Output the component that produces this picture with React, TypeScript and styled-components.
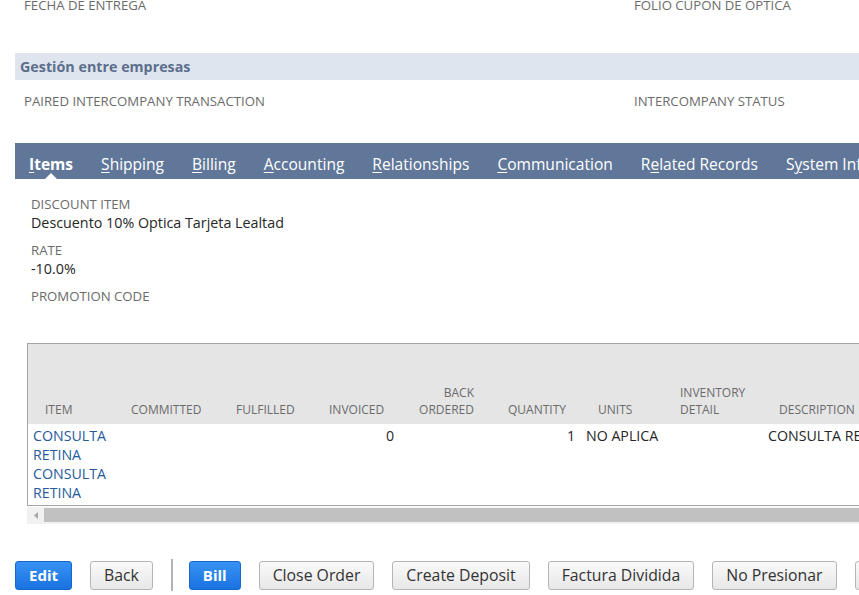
import React from "react";
import styled, { createGlobalStyle } from "styled-components";

const GlobalStyle = createGlobalStyle`
  html, body {
    margin: 0;
    padding: 0;
    background: #ffffff;
    overflow: hidden;
    font-family: "Open Sans", "Liberation Sans", Arial, sans-serif;
  }
`;

const Page = styled.div`
  width: 859px;
  height: 595px;
  overflow: hidden;
  padding-left: 15px;
  box-sizing: border-box;
  display: flex;
  flex-direction: column;
`;

const FieldRow = styled.div<{ $top: number; $bottom: number }>`
  display: grid;
  grid-template-columns: 610px 1fr;
  padding-left: 9px;
  margin-top: ${(p) => p.$top}px;
  margin-bottom: ${(p) => p.$bottom}px;
`;

const Field = styled.div<{ $gap?: number }>`
  display: flex;
  flex-direction: column;
  margin-bottom: ${(p) => p.$gap ?? 0}px;
`;

const Label = styled.div`
  font-size: 13.2px;
  line-height: 17px;
  color: #6b6b6b;
  text-transform: uppercase;
  white-space: nowrap;
`;

const Value = styled.div`
  font-size: 14.3px;
  line-height: 20px;
  min-height: 20px;
  color: #262626;
  white-space: nowrap;
`;

const SectionHeader = styled.div`
  height: 27px;
  line-height: 27px;
  background: #dfe5ee;
  color: #5b6e8c;
  font-weight: 700;
  font-size: 14.3px;
  padding-left: 5px;
  white-space: nowrap;
`;

const TabBar = styled.div`
  height: 36px;
  background: #607799;
  display: flex;
  white-space: nowrap;
  overflow: hidden;
`;

const Tab = styled.div<{ $active?: boolean }>`
  position: relative;
  flex: none;
  padding: 7px 14px 0;
  line-height: 29px;
  font-size: 15.55px;
  color: #ffffff;
  font-weight: ${(p) => (p.$active ? 700 : 400)};
  u {
    text-decoration: underline;
    text-underline-offset: 2px;
    text-decoration-thickness: 1px;
  }
  &::after {
    content: "";
    display: ${(p) => (p.$active ? "block" : "none")};
    position: absolute;
    bottom: 0;
    left: 50%;
    margin-left: -6px;
    width: 0;
    height: 0;
    border-left: 6px solid transparent;
    border-right: 6px solid transparent;
    border-bottom: 6px solid #ffffff;
  }
`;

const TabPanel = styled.div`
  padding: 17px 0 0 12px;
  display: flex;
  flex-direction: column;
`;

const PanelFields = styled.div`
  padding-left: 4px;
  display: flex;
  flex-direction: column;
  margin-bottom: 18px;
`;

const TableBox = styled.div`
  width: 1000px;
  border: 1px solid #a3a3a3;
  display: flex;
  flex-direction: column;
`;

const COLS = "90px 108px 93px 85px 80px 96px 90px 90px 200px";

const HeadRow = styled.div`
  display: grid;
  grid-template-columns: ${COLS};
  height: 80px;
  background: #e5e5e5;
`;

const HeadCell = styled.div<{ $align?: "left" | "right"; $pl?: number; $pr?: number }>`
  display: flex;
  flex-direction: column;
  justify-content: flex-end;
  align-items: ${(p) => (p.$align === "right" ? "flex-end" : "flex-start")};
  text-align: ${(p) => p.$align ?? "left"};
  padding: 0 ${(p) => p.$pr ?? 0}px 6px ${(p) => p.$pl ?? 0}px;
  font-size: 12px;
  line-height: 17px;
  color: #6b6b6b;
  white-space: nowrap;
`;

const DataRow = styled.div`
  display: grid;
  grid-template-columns: ${COLS};
  padding: 2px 0 3px;
  background: #ffffff;
`;

const DataCell = styled.div<{ $align?: "left" | "right"; $pl?: number; $pr?: number; $link?: boolean; $nowrap?: boolean }>`
  text-align: ${(p) => p.$align ?? "left"};
  padding: 0 ${(p) => p.$pr ?? 0}px 0 ${(p) => p.$pl ?? 0}px;
  font-size: 14.2px;
  line-height: 19px;
  color: ${(p) => (p.$link ? "#255a9b" : "#262626")};
  white-space: ${(p) => (p.$nowrap ? "nowrap" : "normal")};
`;

const ScrollTrack = styled.div`
  width: 1000px;
  height: 17px;
  margin-top: 1px;
  background: #f1f1f1;
  display: flex;
  align-items: flex-start;
`;

const ScrollArrow = styled.div`
  width: 17px;
  height: 15px;
  display: flex;
  align-items: center;
  justify-content: center;
  margin-top: 1px;
`;

const ScrollThumb = styled.div`
  flex: 1;
  height: 14px;
  margin-top: 1px;
  background: #c1c1c1;
`;

const ButtonBar = styled.div`
  display: flex;
  align-items: center;
  margin-top: 35px;
  white-space: nowrap;
`;

const Button = styled.button<{ $primary?: boolean }>`
  flex: none;
  height: 29px;
  padding: 0 13px;
  margin-right: 18px;
  border-radius: 3px;
  font-family: "Open Sans", "Liberation Sans", Arial, sans-serif;
  font-size: ${(p) => (p.$primary ? "15px" : "15.8px")};
  line-height: 27px;
  font-weight: ${(p) => (p.$primary ? 700 : 400)};
  color: ${(p) => (p.$primary ? "#ffffff" : "#333333")};
  border: 1px solid ${(p) => (p.$primary ? "#1766c9" : "#b5b5b5")};
  background: ${(p) =>
    p.$primary
      ? "linear-gradient(#3792f4, #1a72e0)"
      : "linear-gradient(#fafafa, #e7e7e7)"};
  cursor: pointer;
`;

const Divider = styled.div`
  flex: none;
  width: 2px;
  height: 32px;
  background: #b3b3b3;
  margin: 0 16px 0 0;
`;

const headers: { label: React.ReactNode; align?: "left" | "right"; pl?: number; pr?: number }[] = [
  { label: "ITEM", pl: 17 },
  { label: "COMMITTED", pl: 13 },
  { label: "FULFILLED", pl: 10 },
  { label: "INVOICED", pl: 10 },
  { label: <>BACK<br />ORDERED</>, align: "right", pr: 10 },
  { label: "QUANTITY", align: "right", pr: 14 },
  { label: "UNITS", pl: 18 },
  { label: <>INVENTORY<br />DETAIL</>, pl: 10 },
  { label: "DESCRIPTION", pl: 19 },
];

export default function App() {
  return (
    <>
      <GlobalStyle />
      <Page>
        <FieldRow $top={-3} $bottom={19}>
          <Field>
            <Label>Fecha de entrega</Label>
            <Value />
          </Field>
          <Field>
            <Label>Folio cupon de optica</Label>
            <Value />
          </Field>
        </FieldRow>

        <SectionHeader>Gestión entre empresas</SectionHeader>

        <FieldRow $top={13} $bottom={13}>
          <Field>
            <Label>Paired intercompany transaction</Label>
            <Value />
          </Field>
          <Field>
            <Label>Intercompany status</Label>
            <Value />
          </Field>
        </FieldRow>

        <TabBar>
          <Tab $active><u>I</u>tems</Tab>
          <Tab><u>S</u>hipping</Tab>
          <Tab><u>B</u>illing</Tab>
          <Tab><u>A</u>ccounting</Tab>
          <Tab><u>R</u>elationships</Tab>
          <Tab><u>C</u>ommunication</Tab>
          <Tab>R<u>e</u>lated Records</Tab>
          <Tab>S<u>y</u>stem Information</Tab>
        </TabBar>

        <TabPanel>
          <PanelFields>
            <Field $gap={9}>
              <Label>Discount item</Label>
              <Value>Descuento 10% Optica Tarjeta Lealtad</Value>
            </Field>
            <Field $gap={9}>
              <Label>Rate</Label>
              <Value>-10.0%</Value>
            </Field>
            <Field>
              <Label>Promotion code</Label>
              <Value />
            </Field>
          </PanelFields>

          <TableBox>
            <HeadRow>
              {headers.map((h, i) => (
                <HeadCell key={i} $align={h.align} $pl={h.pl} $pr={h.pr}>
                  {h.label}
                </HeadCell>
              ))}
            </HeadRow>
            <DataRow>
              <DataCell $link $pl={5}>CONSULTA RETINA CONSULTA RETINA</DataCell>
              <DataCell />
              <DataCell />
              <DataCell $align="right" $pr={10}>0</DataCell>
              <DataCell />
              <DataCell $align="right" $pr={5}>1</DataCell>
              <DataCell $pl={6} $nowrap>NO APLICA</DataCell>
              <DataCell />
              <DataCell $pl={8} $nowrap>CONSULTA RETINA</DataCell>
            </DataRow>
          </TableBox>
          <ScrollTrack>
            <ScrollArrow>
              <svg width="4" height="7" viewBox="0 0 4 7">
                <path d="M4 0 L0 3.5 L4 7 Z" fill="#a8a8a8" />
              </svg>
            </ScrollArrow>
            <ScrollThumb />
          </ScrollTrack>
        </TabPanel>

        <ButtonBar>
          <Button $primary>Edit</Button>
          <Button>Back</Button>
          <Divider />
          <Button $primary>Bill</Button>
          <Button>Close Order</Button>
          <Button>Create Deposit</Button>
          <Button>Factura Dividida</Button>
          <Button>No Presionar</Button>
          <Button>Más</Button>
        </ButtonBar>
      </Page>
    </>
  );
}
